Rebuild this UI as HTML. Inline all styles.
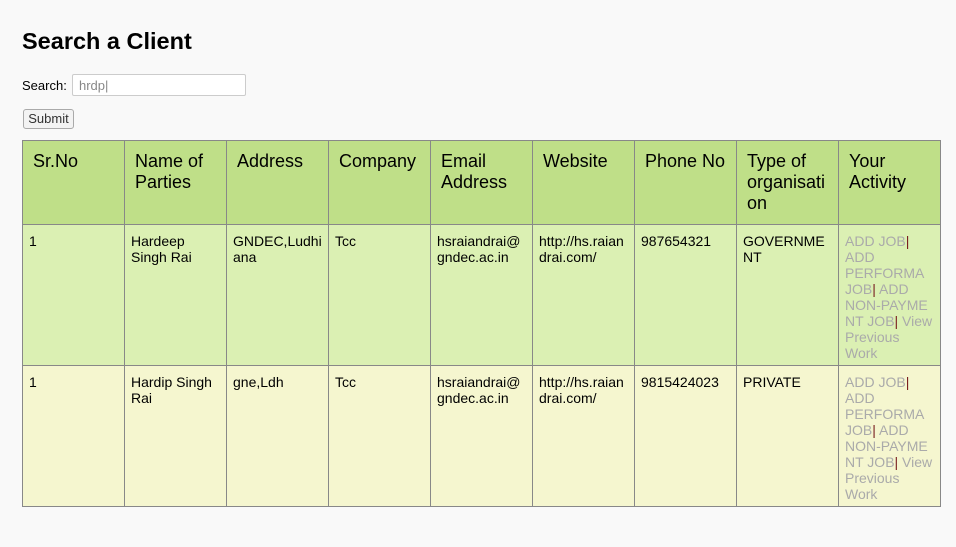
<!DOCTYPE html>
<html><head><meta charset="utf-8"><style>
body{margin:0;background:#f9f9f9;font-family:"Liberation Sans",Arial,sans-serif;color:#000;}
h1{position:absolute;left:22px;top:28px;margin:0;font-size:23.5px;font-weight:bold;}
.s{position:absolute;left:22px;top:78px;font-size:13px;}
.in{position:absolute;left:72px;top:74px;width:174px;height:22px;border:1px solid #ccc;border-radius:2px;background:#fff;font-size:13px;color:#888;box-sizing:border-box;padding:3px 6px;}
.btn{position:absolute;left:23px;top:109px;width:51px;height:20px;border:1px solid #aaa;border-radius:3px;background:#f3f3f3;font-size:13px;color:#333;box-sizing:border-box;text-align:center;line-height:18px;}
table{position:absolute;left:22px;top:140px;border-collapse:collapse;table-layout:fixed;width:919px;}
td,th{border:1px solid #888;vertical-align:top;text-align:left;width:102px;box-sizing:border-box;word-break:break-all;}
th{background:#bfdf88;font-weight:normal;font-size:18px;line-height:21px;padding:10px 10px 9px;height:84px;word-break:normal;overflow-wrap:anywhere;}
td{font-size:14px;line-height:16px;padding:8px 6px 4px;height:141px;}
tr.a td{background:#dbf0b3;}
tr.b td{background:#f5f6cf;}
td.act{color:#aaa;white-space:nowrap;word-break:normal;}
.p{color:#7a2020;}
</style></head><body>
<h1>Search a Client</h1>
<div class="s">Search:</div>
<div class="in">hrdp|</div>
<div class="btn">Submit</div>
<table>
<tr><th>Sr.No</th><th>Name of Parties</th><th>Address</th><th>Company</th><th>Email Address</th><th>Website</th><th>Phone No</th><th>Type of organisation</th><th>Your Activity</th></tr>
<tr class="a"><td>1</td><td style="word-break:normal">Hardeep Singh Rai</td><td>GNDEC,Ludhiana</td><td>Tcc</td><td>hsraiandrai@gndec.ac.in</td><td>http://hs.raiandrai.com/</td><td>987654321</td><td>GOVERNMENT</td><td class="act">ADD JOB<span class="p">|</span><br>ADD<br>PERFORMA<br>JOB<span class="p">|</span> ADD<br>NON-PAYME<br>NT JOB<span class="p">|</span> View<br>Previous<br>Work</td></tr>
<tr class="b"><td>1</td><td style="word-break:normal">Hardip Singh Rai</td><td>gne,Ldh</td><td>Tcc</td><td>hsraiandrai@gndec.ac.in</td><td>http://hs.raiandrai.com/</td><td>9815424023</td><td>PRIVATE</td><td class="act">ADD JOB<span class="p">|</span><br>ADD<br>PERFORMA<br>JOB<span class="p">|</span> ADD<br>NON-PAYME<br>NT JOB<span class="p">|</span> View<br>Previous<br>Work</td></tr>
</table>
</body></html>
